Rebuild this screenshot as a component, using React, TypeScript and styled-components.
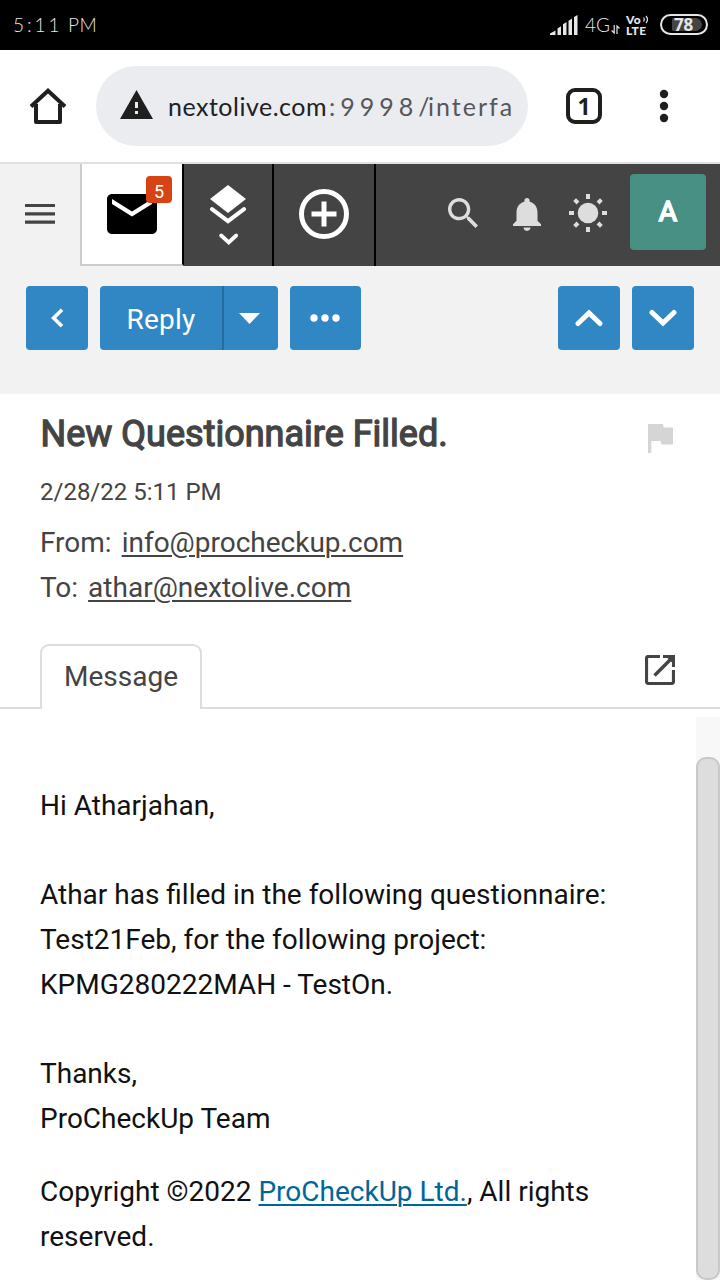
import React from 'react';
import styled, { createGlobalStyle } from 'styled-components';

const GlobalStyle = createGlobalStyle`
  * { box-sizing: border-box; }
  body { margin: 0; background: #fff; font-family: Roboto, "Liberation Sans", sans-serif; overflow: hidden; }
  svg { display: block; flex: none; }
`;

const Screen = styled.div`
  width: 720px;
  height: 1280px;
  display: flex;
  flex-direction: column;
  overflow: hidden;
  background: #fff;
`;

const StatusBar = styled.div`
  height: 50px;
  flex: none;
  display: flex;
  align-items: center;
  padding: 0 12px 0 13px;
  background: #000;
  color: #e6e6e6;
  font-family: Lato, sans-serif;
`;
const Clock = styled.div`
  display: flex;
  font-weight: 300;
  font-size: 19px;
  line-height: 24px;
  flex: 1;
`;
const ClockPart = styled.span<{ $width: number; $spacing: number }>`
  width: ${p => p.$width}px;
  letter-spacing: ${p => p.$spacing}px;
  white-space: nowrap;
`;
const Network = styled.span`
  margin-left: 6px;
  width: 26px;
  font-weight: 300;
  font-size: 19px;
  line-height: 24px;
`;
const DataArrows = styled.svg`
  margin-top: 9px;
`;
const VoLte = styled.div`
  position: relative;
  margin-left: 6px;
  width: 24px;
  font: 900 12px/11px Lato, sans-serif;
  letter-spacing: 0.4px;
  white-space: nowrap;
`;
const Waves = styled.svg`
  position: absolute;
  left: 16px;
  top: 1px;
`;
const Battery = styled.div`
  width: 48px;
  height: 21px;
  margin: 0 0 1px 10px;
  border: 2px solid #e6e6e6;
  border-radius: 11px;
  padding: 2px 4px 2px 10px;
  display: flex;
`;
const BatteryLevel = styled.div`
  flex: 1;
  background: #444;
  border-radius: 2px 7px 7px 2px;
  display: flex;
  align-items: center;
  padding-left: 2px;
  font: 700 17px/13px "Open Sans", sans-serif;
  letter-spacing: -0.3px;
`;

const BrowserBar = styled.div`
  height: 114px;
  flex: none;
  display: flex;
  align-items: center;
  padding: 0 51px 0 28px;
  border-bottom: 2px solid #e0e0e0;
`;
const Omnibox = styled.div`
  width: 432px;
  height: 80px;
  margin: 0 38px 0 28px;
  border-radius: 40px;
  background: #ebecf0;
  display: flex;
  align-items: center;
  padding: 0 16px 0 24px;
`;
const Warning = styled.svg`
  margin-bottom: 3px;
`;
const Url = styled.div`
  display: flex;
  width: 345px;
  margin-left: 15px;
  overflow: hidden;
  font-family: Lato, sans-serif;
  font-size: 25px;
  line-height: 36px;
`;
const UrlPart = styled.span<{ $width: number; $spacing: number; $host?: boolean }>`
  flex: none;
  width: ${p => p.$width}px;
  letter-spacing: ${p => p.$spacing}px;
  color: ${p => (p.$host ? '#202124' : '#55575a')};
  font-weight: 400;
  white-space: nowrap;
`;
const TabCount = styled.div`
  width: 36px;
  height: 36px;
  border: 4px solid #1f1f1f;
  border-radius: 9px;
  display: flex;
  align-items: center;
  justify-content: center;
  margin-right: 57px;
  color: #1f1f1f;
  font: 700 23px/28px "Noto Sans", sans-serif;
`;

const AppHeader = styled.div`
  height: 102px;
  flex: none;
  display: flex;
  background: #444;
`;
const HeaderCell = styled.div<{ $width: number }>`
  width: ${p => p.$width}px;
  border-right: 2px solid #000;
  display: flex;
  flex-direction: column;
  align-items: center;
`;
const MenuCell = styled.div`
  width: 80px;
  background: #f2f2f2;
  display: flex;
  align-items: center;
  justify-content: center;
  padding-bottom: 2px;
`;
const MailCell = styled.div`
  position: relative;
  width: 104px;
  background: #fff;
  border-left: 2px solid #ccc;
  border-bottom: 2px solid #ccc;
  border-right: 2px solid #000;
  padding: 30px 0 0 25px;
`;
const Badge = styled.div`
  position: absolute;
  left: 64px;
  top: 12px;
  width: 26px;
  height: 27px;
  border-radius: 4px;
  background: #d84315;
  color: #fff;
  font-size: 18px;
  line-height: 32px;
  text-align: center;
`;
const HeaderTools = styled.div`
  flex: 1;
  display: flex;
  align-items: flex-start;
  padding: 10px 14px 0 72px;
`;
const ToolIcon = styled.div<{ $left: number; $top: number }>`
  margin: ${p => p.$top}px 0 0 ${p => p.$left}px;
`;
const Avatar = styled.div`
  width: 76px;
  height: 76px;
  margin-left: auto;
  border-radius: 4px;
  background: #489084;
  color: #fff;
  font-size: 28px;
  line-height: 76px;
  text-align: center;
  -webkit-text-stroke: 1.6px #fff;
`;

const Toolbar = styled.div`
  height: 128px;
  flex: none;
  display: flex;
  gap: 12px;
  padding: 20px 26px 0;
  background: #f2f2f2;
`;
const ToolButton = styled.div<{ $width: number; $end?: boolean }>`
  width: ${p => p.$width}px;
  height: 64px;
  margin-left: ${p => (p.$end ? 'auto' : '0')};
  border-radius: 4px;
  background: #3087c3;
  display: flex;
  align-items: center;
  justify-content: center;
`;
const SplitButton = styled(ToolButton)`
  align-items: flex-start;
  justify-content: flex-start;
  color: #fff;
  font-size: 28px;
`;
const ReplyLabel = styled.div`
  width: 124px;
  height: 64px;
  line-height: 67px;
  text-align: center;
  border-right: 2px solid #266c9c;
  letter-spacing: 0.2px;
`;
const SplitArrow = styled.div`
  flex: 1;
  height: 64px;
  display: flex;
  align-items: center;
  justify-content: center;
  padding-right: 3px;
`;

const MessageHead = styled.div`
  height: 250px;
  flex: none;
  display: flex;
  justify-content: space-between;
  padding: 18px 47px 0 40px;
  color: #444;
`;
const Title = styled.h1`
  margin: 0 0 18px 0.6px;
  font-weight: 400;
  font-size: 36px;
  line-height: 44px;
  -webkit-text-stroke: 1.3px #444;
  white-space: nowrap;
`;
const DateLine = styled.div`
  font-size: 24px;
  line-height: 36px;
  margin-bottom: 10px;
`;
const AddressLine = styled.div`
  display: flex;
  gap: 10px;
  font-size: 28px;
  line-height: 45px;
`;
const Address = styled.a<{ $link?: boolean }>`
  color: ${p => (p.$link ? '#00669a' : 'inherit')};
  text-decoration: underline;
  text-decoration-thickness: 2px;
  text-underline-offset: 3px;
`;
const FlagHolder = styled.div`
  padding-top: 12px;
`;

const Tabs = styled.div`
  height: 65px;
  flex: none;
  display: flex;
  align-items: flex-start;
`;
const TabEdge = styled.div`
  width: 40px;
  height: 65px;
  border-bottom: 2px solid #ddd;
`;
const TabActions = styled(TabEdge)`
  flex: 1;
  display: flex;
  justify-content: flex-end;
  padding: 11px 45px 0 0;
`;
const Tab = styled.div`
  width: 162px;
  height: 65px;
  border: 2px solid #ddd;
  border-bottom: 0;
  border-radius: 9px 9px 0 0;
  color: #444;
  font-size: 28px;
  line-height: 61px;
  text-align: center;
`;

const BodyRow = styled.div`
  flex: 1;
  display: flex;
  justify-content: space-between;
  padding-top: 8px;
`;
const MessageBody = styled.div`
  width: 640px;
  padding: 66.5px 0 0 40px;
  color: #111;
  font-size: 28px;
  line-height: 44.8px;
`;
const Paragraph = styled.p<{ $gap: number }>`
  margin: 0 0 ${p => p.$gap}px;
  white-space: nowrap;
`;
const ScrollTrack = styled.div`
  width: 24px;
  padding-top: 40px;
  background: #f8f8f8;
  display: flex;
`;
const ScrollThumb = styled.div`
  flex: 1;
  background: #ddd;
  border: 2px solid #c8c8c8;
  border-radius: 10px;
`;

export default function App() {
  return (
    <Screen>
      <GlobalStyle />
      <StatusBar>
        <Clock>
          <ClockPart $width={55} $spacing={3}>5:11</ClockPart>
          <ClockPart $width={40} $spacing={0.6}>PM</ClockPart>
        </Clock>
        <svg width="29" height="20" viewBox="0 0 29 20" fill="#e6e6e6">
          <path d="M0 20V18.5L5.5 15.5V20zM7.5 20V13.5L11 11.2V20zM13 20V9.2L16.5 7V20zM18.5 20V5.8L22 3.5V20zM24 20V2L27.5 0V20z" />
        </svg>
        <Network>4G</Network>
        <DataArrows width="9" height="9" viewBox="0 0 9 9" stroke="#e6e6e6" strokeWidth="1.2" fill="none">
          <path d="M3.2 0V8L.7 5.5M6 9V1L8.5 3.5" />
        </DataArrows>
        <VoLte>
          Vo<br />LTE
          <Waves width="7" height="9" viewBox="0 0 7 9" fill="none" stroke="#e6e6e6" strokeWidth="1.2">
            <path d="M1.5 2.5Q3 4.5 1.5 6.5M4 1Q7 4.5 4 8" />
          </Waves>
        </VoLte>
        <Battery><BatteryLevel>78</BatteryLevel></Battery>
      </StatusBar>

      <BrowserBar>
        <svg width="40" height="40" viewBox="0 0 40 40" fill="none" stroke="#1f1f1f" strokeWidth="4" strokeLinejoin="round">
          <path d="M8 18V36H32V18" />
          <path d="M3 20.5L20 4.8L37 20.5" strokeLinejoin="miter" />
        </svg>
        <Omnibox>
          <Warning width="33" height="29" viewBox="0 0 33 29">
            <path d="M16.5 0L33 29H0z" fill="#1f1f1f" />
            <path d="M15 12h3v6h-3zM15 21h3v3h-3z" fill="#ebecf0" />
          </Warning>
          <Url>
            <UrlPart $host $width={161} $spacing={0.5}>nextolive.com</UrlPart>
            <UrlPart $width={99} $spacing={5}>:9998/</UrlPart>
            <UrlPart $width={90} $spacing={2}>interfa</UrlPart>
          </Url>
        </Omnibox>
        <TabCount>1</TabCount>
        <svg width="10" height="34" viewBox="0 0 10 34" fill="#1f1f1f">
          <circle cx="5" cy="5" r="4.2" />
          <circle cx="5" cy="17" r="4.2" />
          <circle cx="5" cy="29" r="4.2" />
        </svg>
      </BrowserBar>

      <AppHeader>
        <MenuCell>
          <svg width="30" height="20" viewBox="0 0 30 20" fill="#444">
            <path d="M0 0h30v3H0zM0 8.3h30v3.2H0zM0 16.5h30v3.2H0z" />
          </svg>
        </MenuCell>
        <MailCell>
          <svg width="50" height="40" viewBox="2 4 20 16">
            <path d="M20 4H4c-1.1 0-2 .9-2 2v12c0 1.1.9 2 2 2h16c1.1 0 2-.9 2-2V6c0-1.1-.9-2-2-2zm0 4l-8 5-8-5V6l8 5 8-5v2z" />
          </svg>
          <Badge>5</Badge>
        </MailCell>
        <HeaderCell $width={90}>
          <svg width="36" height="62" viewBox="0 0 36 62">
            <path d="M18 21L36 35L18 49L0 35z" fill="#fff" />
            <path d="M2 45.2L18 57.2L34 45.2" fill="none" stroke="#fff" strokeWidth="4" strokeLinecap="round" />
          </svg>
          <svg width="20" height="22" viewBox="0 0 20 22" fill="none" stroke="#fff" strokeWidth="3.8" strokeLinecap="round">
            <path d="M3.2 9.5L10.7 16.5L18.2 9.5" />
          </svg>
        </HeaderCell>
        <HeaderCell $width={102}>
          <svg width="50" height="100" viewBox="0 0 50 100" fill="none" stroke="#fff" strokeWidth="5">
            <circle cx="25" cy="50" r="22.5" />
            <path d="M12.5 50h25M25 37.5v25" />
          </svg>
        </HeaderCell>
        <HeaderTools>
          <ToolIcon $left={0} $top={24}>
            <svg width="30" height="30" viewBox="3 3 17.49 17.49" fill="#ddd">
              <path d="M15.5 14h-.79l-.28-.27C15.41 12.59 16 11.11 16 9.5 16 5.91 13.09 3 9.5 3S3 5.91 3 9.5 5.91 16 9.5 16c1.61 0 3.09-.59 4.23-1.57l.27.28v.79l5 4.99L20.49 19l-4.99-5zm-6 0C7.01 14 5 11.99 5 9.5S7.01 5 9.5 5 14 7.01 14 9.5 11.99 14 9.5 14z" />
            </svg>
          </ToolIcon>
          <ToolIcon $left={35} $top={24}>
            <svg width="28" height="33" viewBox="4 2.5 16 19.5" preserveAspectRatio="none" fill="#ddd">
              <path d="M12 22c1.1 0 2-.9 2-2h-4c0 1.1.9 2 2 2zm6-6v-5c0-3.07-1.63-5.64-4.5-6.32V4c0-.83-.67-1.5-1.5-1.5s-1.5.67-1.5 1.5v.68C7.64 5.36 6 7.92 6 11v5l-2 2v1h16v-1l-2-2z" />
            </svg>
          </ToolIcon>
          <ToolIcon $left={28} $top={20}>
            <svg width="38" height="38" viewBox="-19 -19 38 38" fill="#ddd" stroke="#ddd" strokeWidth="4">
              <circle r="10.3" stroke="none" />
              <path d="M0-19v5M0 19v-5M-19 0h5M19 0h-5M-13.4-13.4l3.4 3.4M13.4-13.4l-3.4 3.4M-13.4 13.4l3.4-3.4M13.4 13.4l-3.4-3.4" />
            </svg>
          </ToolIcon>
          <Avatar>A</Avatar>
        </HeaderTools>
      </AppHeader>

      <Toolbar>
        <ToolButton $width={62}>
          <svg width="14" height="20" viewBox="0 0 14 20" fill="none" stroke="#fff" strokeWidth="3.6">
            <path d="M12 1.7L3.6 10L12 18.3" />
          </svg>
        </ToolButton>
        <SplitButton $width={178}>
          <ReplyLabel>Reply</ReplyLabel>
          <SplitArrow>
            <svg width="21" height="11" viewBox="0 0 21 11" fill="#fff"><path d="M0 0h21L10.5 11z" /></svg>
          </SplitArrow>
        </SplitButton>
        <ToolButton $width={71}>
          <svg width="31" height="8" viewBox="0 0 31 8" fill="#fff">
            <circle cx="4" cy="4" r="3.7" />
            <circle cx="15" cy="4" r="3.7" />
            <circle cx="26" cy="4" r="3.7" />
          </svg>
        </ToolButton>
        <ToolButton $width={62} $end>
          <svg width="28" height="18" viewBox="0 0 28 18" fill="none" stroke="#fff" strokeWidth="5" strokeLinecap="round">
            <path d="M3 14.5L14 4L25 14.5" />
          </svg>
        </ToolButton>
        <ToolButton $width={62}>
          <svg width="28" height="18" viewBox="0 0 28 18" fill="none" stroke="#fff" strokeWidth="5" strokeLinecap="round">
            <path d="M3 3.5L14 14L25 3.5" />
          </svg>
        </ToolButton>
      </Toolbar>

      <MessageHead>
        <div>
          <Title>New Questionnaire Filled.</Title>
          <DateLine>2/28/22 5:11 PM</DateLine>
          <AddressLine>From: <Address>info@procheckup.com</Address></AddressLine>
          <AddressLine>To: <Address>athar@nextolive.com</Address></AddressLine>
        </div>
        <FlagHolder>
          <svg width="25" height="29" viewBox="5 4 15 17" preserveAspectRatio="none" fill="#d5d5d5">
            <path d="M14.4 6L14 4H5v17h2v-7h5.6l.4 2h7V6z" />
          </svg>
        </FlagHolder>
      </MessageHead>

      <Tabs>
        <TabEdge />
        <Tab>Message</Tab>
        <TabActions>
          <svg width="30" height="30" viewBox="0 0 30 30">
            <path d="M15 1.5H3.5Q1.5 1.5 1.5 3.5V26.5Q1.5 28.5 3.5 28.5H26.5Q28.5 28.5 28.5 26.5V15" fill="none" stroke="#444" strokeWidth="3.2" />
            <path d="M9.5 20.5L26 4" stroke="#444" strokeWidth="3.4" fill="none" />
            <path d="M18 0H30V12H27V7.5L22.5 3H18z" fill="#444" />
          </svg>
        </TabActions>
      </Tabs>

      <BodyRow>
        <MessageBody>
          <Paragraph $gap={44.8}>Hi Atharjahan,</Paragraph>
          <Paragraph $gap={44.8}>
            Athar has filled in the following questionnaire:<br />
            Test21Feb, for the following project:<br />
            KPMG280222MAH - TestOn.
          </Paragraph>
          <Paragraph $gap={28}>
            Thanks,<br />
            ProCheckUp Team
          </Paragraph>
          <Paragraph $gap={0}>
            Copyright ©2022 <Address $link>ProCheckUp Ltd.</Address>, All rights<br />
            reserved.
          </Paragraph>
        </MessageBody>
        <ScrollTrack><ScrollThumb /></ScrollTrack>
      </BodyRow>
    </Screen>
  );
}
